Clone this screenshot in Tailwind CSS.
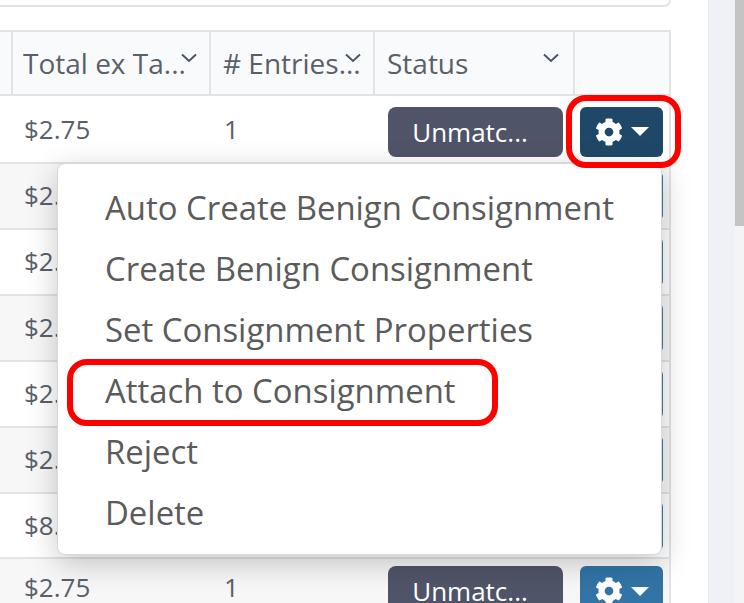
<!DOCTYPE html>
<html lang="en">
<head>
    <meta charset="UTF-8">
    <title>Consignments</title>
    <script src="https://cdn.jsdelivr.net/npm/@tailwindcss/browser@4"></script>
</head>
<body class="bg-white font-['Open_Sans',sans-serif] text-[#5a5f69] overflow-hidden">
    <div class="relative w-[744px] h-[603px] overflow-hidden flex">
        <!-- page content -->
        <div class="w-[708px] shrink-0">
            <div class="h-[7px] w-[671px] border-b-2 border-r-2 border-[#e2e3e6] rounded-br-lg"></div>
            <div class="mt-[23px] w-[671px] border-2 border-l-0 border-b-0 border-[#e2e3e6] text-[26px] leading-[26px]">
                <!-- header -->
                <div class="flex h-[64px] bg-[#f9fafc] border-b-2 border-[#e2e3e6] text-[28px]">
                    <div class="w-[13px] border-r-2 border-[#e2e3e6]"></div>
                    <div class="w-[198px] border-r-2 border-[#e2e3e6] relative pl-[10px] flex items-center">Total ex Ta...
                        <svg class="absolute left-[168px] top-[21px]" width="16" height="10" viewBox="0 0 16 10" fill="none" stroke="#4a5568" stroke-width="2"><path d="M1 1.5l7 6.5 7-6.5"/></svg>
                    </div>
                    <div class="w-[164px] border-r-2 border-[#e2e3e6] relative pl-[12px] flex items-center whitespace-nowrap"># Entries...
                        <svg class="absolute left-[134px] top-[21px]" width="16" height="10" viewBox="0 0 16 10" fill="none" stroke="#4a5568" stroke-width="2"><path d="M1 1.5l7 6.5 7-6.5"/></svg>
                    </div>
                    <div class="w-[200px] border-r-2 border-[#e2e3e6] relative pl-[12px] flex items-center">Status
                        <svg class="absolute left-[168px] top-[21px]" width="16" height="10" viewBox="0 0 16 10" fill="none" stroke="#4a5568" stroke-width="2"><path d="M1 1.5l7 6.5 7-6.5"/></svg>
                    </div>
                    <div class="flex-1"></div>
                </div>
                <!-- rows -->
                <div class="flex h-[68px] border-b-2 border-[#e2e3e6] items-center">
                    <div class="w-[224px] pl-[24px]">$2.75</div><div class="w-[164px]">1</div>
                    <div class="mt-[5px] w-[175px] h-[50px] rounded-lg bg-[#4f5468] text-white flex items-center justify-center pr-[11px]">Unmatc...</div>
                    <div class="mt-[5px] ml-[17px] w-[83px] h-[50px] rounded-md bg-[#1f4868] flex items-center justify-center gap-[8px]">
                        <svg class="w-[28px] h-[28px] shrink-0" viewBox="0 0 512 512" fill="#fff"><path d="M487.4 315.7l-42.6-24.6c4.3-23.2 4.3-47 0-70.2l42.6-24.6c4.9-2.8 7.1-8.6 5.5-14-11.1-35.6-30-67.8-54.7-94.6-3.8-4.1-10-5.1-14.8-2.3L380.8 110c-17.9-15.4-38.5-27.3-60.8-35.1V25.8c0-5.6-3.9-10.5-9.4-11.7-36.7-8.2-74.3-7.8-109.2 0-5.5 1.2-9.4 6.1-9.4 11.7V75c-22.2 7.9-42.8 19.8-60.8 35.1L88.7 85.5c-4.9-2.8-11-1.9-14.8 2.3-24.7 26.7-43.6 58.9-54.7 94.6-1.7 5.4.6 11.2 5.5 14L67.3 221c-4.3 23.2-4.3 47 0 70.2l-42.6 24.6c-4.9 2.8-7.1 8.6-5.5 14 11.1 35.6 30 67.8 54.7 94.6 3.8 4.1 10 5.1 14.8 2.3l42.6-24.6c17.9 15.4 38.5 27.3 60.8 35.1v49.2c0 5.6 3.9 10.5 9.4 11.7 36.7 8.2 74.3 7.8 109.2 0 5.5-1.2 9.4-6.1 9.4-11.7v-49.2c22.2-7.9 42.8-19.8 60.8-35.1l42.6 24.6c4.9 2.8 11 1.9 14.8-2.3 24.7-26.7 43.6-58.9 54.7-94.6 1.5-5.5-.7-11.3-5.6-14.1zM256 336c-44.1 0-80-35.9-80-80s35.9-80 80-80 80 35.9 80 80-35.9 80-80 80z"/></svg>
                        <span class="w-0 h-0 border-x-[9px] border-x-transparent border-t-[9px] border-t-white"></span>
                    </div>
                </div>
                <!-- rows 2-7 sit behind the open menu, only the price start and button edge show -->
                <div class="flex h-[66px] border-b-2 border-[#e2e3e6] bg-[#f7f7f8] items-center">
                    <div class="w-[580px] pl-[24px] pb-[2px]">$2.</div>
                    <div class="w-[83px] h-[50px] rounded-md bg-[#3f7dab]"></div>
                </div>
                <div class="flex h-[66px] border-b-2 border-[#e2e3e6] items-center">
                    <div class="w-[580px] pl-[24px] pb-[2px]">$2.</div>
                    <div class="w-[83px] h-[50px] rounded-md bg-[#3f7dab]"></div>
                </div>
                <div class="flex h-[66px] border-b-2 border-[#e2e3e6] bg-[#f7f7f8] items-center">
                    <div class="w-[580px] pl-[24px] pb-[2px]">$2.</div>
                    <div class="w-[83px] h-[50px] rounded-md bg-[#3f7dab]"></div>
                </div>
                <div class="flex h-[66px] border-b-2 border-[#e2e3e6] items-center">
                    <div class="w-[580px] pl-[24px] pb-[2px]">$2.</div>
                    <div class="w-[83px] h-[50px] rounded-md bg-[#3f7dab]"></div>
                </div>
                <div class="flex h-[66px] border-b-2 border-[#e2e3e6] bg-[#f7f7f8] items-center">
                    <div class="w-[580px] pl-[24px] pb-[2px]">$2.</div>
                    <div class="w-[83px] h-[50px] rounded-md bg-[#3f7dab]"></div>
                </div>
                <div class="flex h-[65px] border-b-2 border-[#e2e3e6] items-center">
                    <div class="w-[580px] pl-[24px] pb-[2px]">$8.</div>
                    <div class="w-[83px] h-[50px] rounded-md bg-[#3f7dab]"></div>
                </div>
                <div class="flex h-[44px] bg-[#f7f7f8] items-start">
                    <div class="w-[224px] pl-[24px] pt-[15px]">$2.75</div><div class="w-[164px] pt-[15px]">1</div>
                    <div class="mt-[7px] w-[175px] h-[50px] rounded-lg bg-[#4f5468] text-white flex items-start pt-[12px] justify-center pr-[11px]">Unmatc...</div>
                    <div class="mt-[7px] ml-[17px] w-[83px] h-[50px] rounded-md bg-[#3274a5] flex items-center justify-center gap-[8px]">
                        <svg class="w-[28px] h-[28px] shrink-0" viewBox="0 0 512 512" fill="#fff"><path d="M487.4 315.7l-42.6-24.6c4.3-23.2 4.3-47 0-70.2l42.6-24.6c4.9-2.8 7.1-8.6 5.5-14-11.1-35.6-30-67.8-54.7-94.6-3.8-4.1-10-5.1-14.8-2.3L380.8 110c-17.9-15.4-38.5-27.3-60.8-35.1V25.8c0-5.6-3.9-10.5-9.4-11.7-36.7-8.2-74.3-7.8-109.2 0-5.5 1.2-9.4 6.1-9.4 11.7V75c-22.2 7.9-42.8 19.8-60.8 35.1L88.7 85.5c-4.9-2.8-11-1.9-14.8 2.3-24.7 26.7-43.6 58.9-54.7 94.6-1.7 5.4.6 11.2 5.5 14L67.3 221c-4.3 23.2-4.3 47 0 70.2l-42.6 24.6c-4.9 2.8-7.1 8.6-5.5 14 11.1 35.6 30 67.8 54.7 94.6 3.8 4.1 10 5.1 14.8 2.3l42.6-24.6c17.9 15.4 38.5 27.3 60.8 35.1v49.2c0 5.6 3.9 10.5 9.4 11.7 36.7 8.2 74.3 7.8 109.2 0 5.5-1.2 9.4-6.1 9.4-11.7v-49.2c22.2-7.9 42.8-19.8 60.8-35.1l42.6 24.6c4.9 2.8 11 1.9 14.8-2.3 24.7-26.7 43.6-58.9 54.7-94.6 1.5-5.5-.7-11.3-5.6-14.1zM256 336c-44.1 0-80-35.9-80-80s35.9-80 80-80 80 35.9 80 80-35.9 80-80 80z"/></svg>
                        <span class="w-0 h-0 border-x-[9px] border-x-transparent border-t-[9px] border-t-white"></span>
                    </div>
                </div>
            </div>
        </div>
        <!-- scrollbar -->
        <div class="flex-1 flex">
            <div class="w-[27px] bg-[#eff1f6] border-l border-[#e6e8ef]"></div>
            <div class="flex-1 bg-[#f4f4f6]">
                <div class="h-[226px] bg-[#c4c4c4]"></div>
            </div>
        </div>
        <!-- dropdown menu -->
        <div class="absolute left-[57px] top-[163px] w-[605px] h-[392px] bg-white rounded-lg border border-[#d8d8d8] shadow-[0_8px_30px_rgba(0,0,0,0.22)] pt-[13px] pl-[47px] text-[32.9px] leading-[61px] text-[#5b5b5b]">
            <div>Auto Create Benign Consignment</div>
            <div>Create Benign Consignment</div>
            <div>Set Consignment Properties</div>
            <div>Attach to Consignment</div>
            <div>Reject</div>
            <div>Delete</div>
        </div>
        <!-- annotations -->
        <div class="absolute left-[566px] top-[95px] w-[115px] h-[73px] border-[6px] border-[#ff0000] rounded-[20px]"></div>
        <div class="absolute left-[67px] top-[359px] w-[431px] h-[67px] border-[6px] border-[#ff0000] rounded-[20px]"></div>
    </div>
</body>
</html>
